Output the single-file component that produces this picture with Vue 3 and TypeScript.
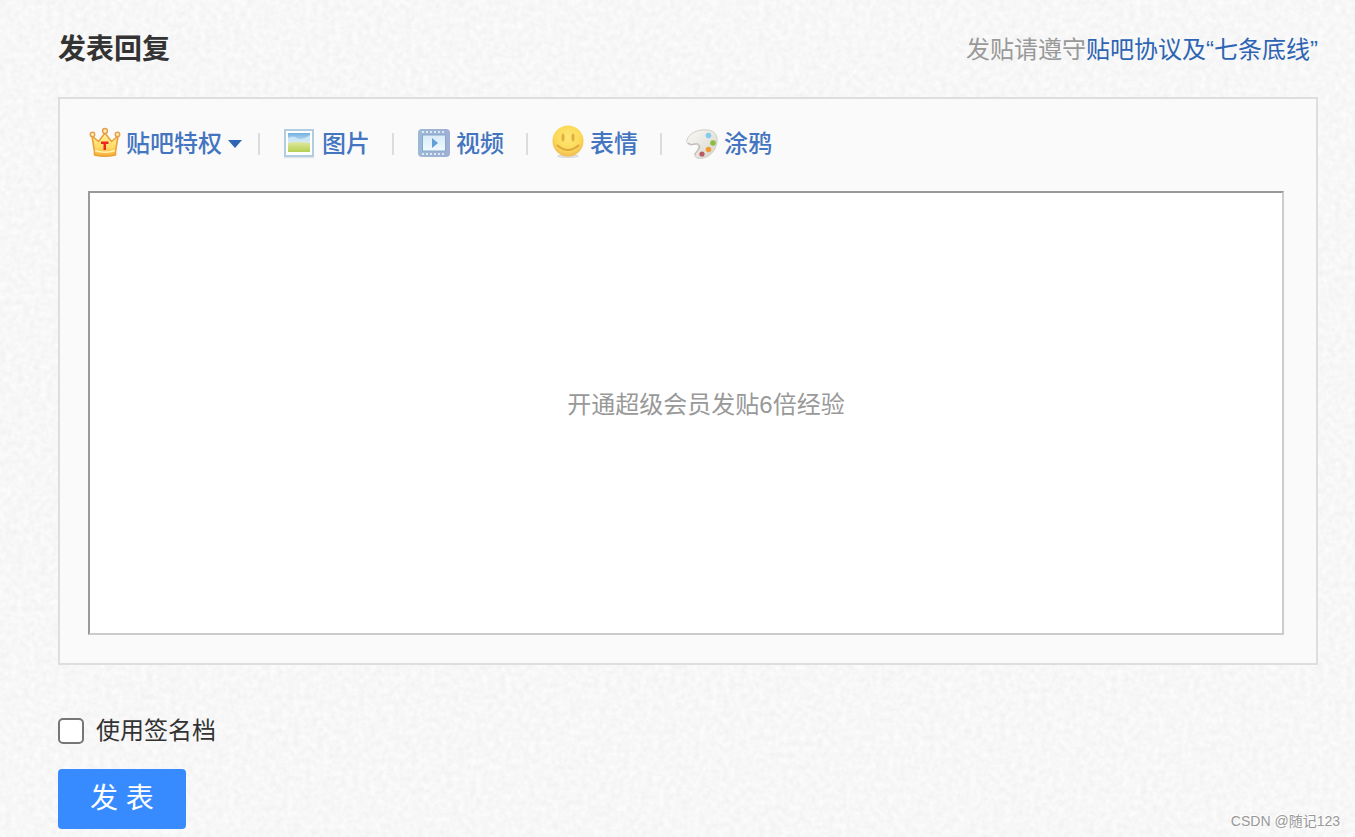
<script setup lang="ts">
import { ref } from 'vue'

interface Tool {
  id: string
  label: string
  menu?: boolean
}

const tools: Tool[] = [
  { id: 'crown', label: '贴吧特权', menu: true },
  { id: 'image', label: '图片' },
  { id: 'video', label: '视频' },
  { id: 'smile', label: '表情' },
  { id: 'paint', label: '涂鸦' },
]

const filmHoles: number[] = [6, 10, 14, 18, 22, 26]
const content = ref<string>('')
const useSignature = ref<boolean>(false)
</script>

<template>
  <main class="page">
    <svg class="paper" aria-hidden="true">
      <filter id="grain" x="0" y="0" width="100%" height="100%" color-interpolation-filters="sRGB">
        <feTurbulence type="fractalNoise" baseFrequency="0.17" numOctaves="3" seed="4" />
        <feColorMatrix values="0 0 0 .06 .939  0 0 0 .06 .939  0 0 0 .06 .939  0 0 0 0 1" />
      </filter>
      <rect width="100%" height="100%" filter="url(#grain)" />
    </svg>

    <header class="head">
      <h1 class="title">发表回复</h1>
      <p class="rules">发贴请遵守<a href="#rules">贴吧协议及“七条底线”</a></p>
    </header>

    <section class="panel">
      <div class="toolbar">
        <button v-for="tool in tools" :key="tool.id" type="button" class="tool" :class="{ 'has-menu': tool.menu }">
          <svg v-if="tool.id === 'crown'" class="icon" viewBox="0 0 32 32" aria-hidden="true">
            <defs>
              <linearGradient id="gold" x1="0" y1="0" x2="0" y2="1">
                <stop offset="0" stop-color="#fff0a0" />
                <stop offset=".6" stop-color="#ffdc67" />
                <stop offset="1" stop-color="#f6ac35" />
              </linearGradient>
            </defs>
            <path d="M4 8 10.500 13.500 17 5l6.500 8.500L30 8l-2.500 15.500V27q-10.500 2.500-21 0v-3.500Z" fill="url(#gold)" stroke="#e9a23b" stroke-width="1.600" stroke-linejoin="round" />
            <path d="M7 22.500q10 3.500 20 0" fill="none" stroke="#fff3b1" stroke-width="1.600" />
            <circle cx="4.500" cy="6.500" r="2.200" fill="#fff0bd" stroke="#e5a04c" stroke-width="1.500" />
            <circle cx="17" cy="3" r="2.400" fill="#fff0bd" stroke="#e5a04c" stroke-width="1.500" />
            <circle cx="29.500" cy="6.500" r="2.200" fill="#fff0bd" stroke="#e5a04c" stroke-width="1.500" />
            <path d="M13 13.500h7.500v2.500H18v6h-2.500v-6H13Z" fill="#e9281f" />
          </svg>
          <svg v-else-if="tool.id === 'image'" class="icon" viewBox="0 0 32 32" aria-hidden="true">
            <defs>
              <linearGradient id="sky" x1="0" y1="0" x2="0" y2="1">
                <stop offset="0" stop-color="#74b0df" />
                <stop offset="1" stop-color="#d8eff9" />
              </linearGradient>
              <linearGradient id="grass" x1="0" y1="0" x2="0" y2="1">
                <stop offset="0" stop-color="#e0e7a0" />
                <stop offset="1" stop-color="#b5d052" />
              </linearGradient>
            </defs>
            <path d="M0 29.500h30" stroke="#dfe6ea" stroke-width="1.500" />
            <rect x="1" y="2" width="28" height="26" fill="#fff" stroke="#b0cde1" stroke-width="2" />
            <rect x="4" y="5" width="22" height="11" fill="url(#sky)" />
            <path d="M4 10q5-3 9 0t13-3v9H4Z" fill="#d4eaf6" opacity=".8" />
            <path d="M4 15q9-2 22 0v9H4Z" fill="url(#grass)" />
          </svg>
          <svg v-else-if="tool.id === 'video'" class="icon" viewBox="0 0 32 32" aria-hidden="true">
            <defs>
              <linearGradient id="film" x1="0" y1="0" x2="1" y2="0">
                <stop offset="0" stop-color="#9cb9d4" />
                <stop offset="1" stop-color="#a0aed5" />
              </linearGradient>
              <linearGradient id="screen" x1="0" y1="0" x2="0" y2="1">
                <stop offset="0" stop-color="#d8ebf7" />
                <stop offset="1" stop-color="#f0faff" />
              </linearGradient>
            </defs>
            <rect x="0" y="1" width="32" height="28" rx="4" fill="url(#film)" />
            <rect x="4.500" y="7" width="23" height="16" fill="url(#screen)" stroke="#86a8cb" />
            <g fill="#dce8f3">
              <rect v-for="x in filmHoles" :key="x" :x="x - 2" y="3" width="2" height="2" />
              <rect v-for="x in filmHoles" :key="x + 40" :x="x - 2" y="25" width="2" height="2" />
            </g>
            <path d="M14 10v10l6-5Z" fill="#60a0d8" />
          </svg>
          <svg v-else-if="tool.id === 'smile'" class="icon" viewBox="0 0 32 32" aria-hidden="true">
            <defs>
              <radialGradient id="face" cx=".5" cy=".4" r=".6">
                <stop offset="0" stop-color="#ffe775" />
                <stop offset=".7" stop-color="#fbd956" />
                <stop offset="1" stop-color="#efba55" />
              </radialGradient>
            </defs>
            <ellipse cx="16" cy="28" rx="11" ry="2" fill="#ddd" />
            <circle cx="16" cy="13" r="15.500" fill="url(#face)" />
            <ellipse cx="11" cy="9.500" rx="1.600" ry="4" fill="#e0b045" />
            <ellipse cx="21" cy="9.500" rx="1.600" ry="4" fill="#e0b045" />
            <path d="M5.500 17.500q10.500 9 21 0" fill="none" stroke="#dda63e" stroke-width="2" stroke-linecap="round" />
          </svg>
          <svg v-else class="icon" viewBox="0 0 32 32" aria-hidden="true">
            <defs>
              <linearGradient id="board" x1="0" y1="0" x2="1" y2="1">
                <stop offset="0" stop-color="#faf9f4" />
                <stop offset="1" stop-color="#d6d5cc" />
              </linearGradient>
            </defs>
            <path d="M1 12C3 5 12 1 21 2c7 0 11 5 10 12-1 8-7 15-14 16-5 1-9 0-8-4 1-3 5-6 3-9-2-2-5 0-8 0-3-1-4-3-3-5Z" fill="url(#board)" stroke="#cfcec6" />
            <path d="M2 15q3 2.500 7 1c4-1 6 2 4 5s-4 4-4 6" fill="none" stroke="#b5b4ab" />
            <circle cx="22.500" cy="7.500" r="2.800" fill="#83cbed" />
            <circle cx="27" cy="15" r="2.800" fill="#8bbb42" />
            <circle cx="22.500" cy="21.500" r="2.800" fill="#f39b36" />
            <circle cx="16" cy="26" r="2.600" fill="#ba5961" />
          </svg>
          <span>{{ tool.label }}</span>
          <svg v-if="tool.menu" class="caret" viewBox="0 0 14 8" aria-hidden="true"><path d="M0 0h14L7 8Z" fill="#2d64b3" /></svg>
        </button>
      </div>

      <div class="editor">
        <textarea id="reply" v-model="content" class="field"></textarea>
        <label v-show="!content" class="hint" for="reply">开通超级会员发贴6倍经验</label>
      </div>
    </section>

    <label class="signature"><input v-model="useSignature" type="checkbox" class="check" /><span>使用签名档</span></label>
    <button type="button" class="submit">发 表</button>
    <div class="mark">CSDN @随记123</div>
  </main>
</template>

<style>
body {
  margin: 0;
  background: #f7f7f7;
}
</style>

<style scoped>
.page {
  position: relative;
  box-sizing: border-box;
  min-height: 100vh;
  padding: 26px 37px 8px 58px;
  font-family: "Liberation Sans", "Noto Sans CJK SC", sans-serif;
  font-size: 24px;
  line-height: 36px;
  color: #333;
  isolation: isolate;
}
.paper {
  position: absolute;
  inset: 0;
  z-index: -1;
  width: 100%;
  height: 100%;
}
.head {
  display: flex;
  align-items: center;
  justify-content: space-between;
  height: 48px;
  margin-bottom: 23px;
}
.title {
  margin: 0;
  font-size: 28px;
  font-weight: 700;
}
.rules {
  margin: 0;
  color: #999;
}
.rules a {
  color: #2d64b3;
  text-decoration: none;
}
.panel {
  padding: 29px 32px 28px 28px;
  border: 2px solid #dedede;
  background: #fafafa;
}
.toolbar {
  display: flex;
  align-items: center;
  margin-bottom: 31px;
}
.tool {
  display: flex;
  align-items: center;
  gap: 6px;
  height: 32px;
  padding: 0 22px 0 0;
  border: 0;
  background: none;
  font: inherit;
  font-weight: 500;
  line-height: 32px;
  color: #4475c0;
  cursor: pointer;
}
.tool.has-menu {
  padding-right: 16px;
}
.tool + .tool::before {
  content: "";
  width: 2px;
  height: 22px;
  margin-right: 18px;
  background: #dcdcdc;
}
.icon {
  width: 32px;
  height: 32px;
  overflow: visible;
}
.caret {
  width: 14px;
  height: 8px;
}
.editor {
  display: grid;
}
.field,
.hint {
  grid-area: 1 / 1;
}
.field {
  box-sizing: border-box;
  width: 100%;
  height: 444px;
  padding: 12px;
  border: 2px solid;
  border-color: #999 #ccc #ccc #999;
  border-radius: 0;
  outline: 0;
  background: #fff;
  font: inherit;
  color: inherit;
  resize: none;
}
.hint {
  place-self: center;
  padding: 0 0 16px 40px;
  color: #999;
  pointer-events: none;
}
.signature {
  display: flex;
  align-items: center;
  gap: 12px;
  width: max-content;
  margin-top: 48px;
}
.check {
  appearance: none;
  box-sizing: border-box;
  width: 26px;
  height: 26px;
  margin: 0;
  border: 2px solid #767676;
  border-radius: 5px;
  background: #fff;
}
.check:checked {
  border-color: #388bff;
  background: #388bff;
}
.submit {
  display: block;
  height: 60px;
  margin-top: 20px;
  padding: 0 32px;
  border: 0;
  border-radius: 4px;
  background: #388bff;
  font: inherit;
  font-size: 28px;
  color: #fff;
  cursor: pointer;
}
.mark {
  position: absolute;
  right: 15px;
  bottom: 6px;
  font-size: 14px;
  line-height: 20px;
  color: #999;
  text-shadow: -1px -1px 0 #fff;
}
</style>
